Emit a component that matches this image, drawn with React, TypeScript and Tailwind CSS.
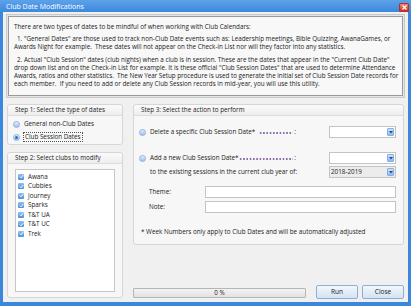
import React from 'react';

const font = { fontFamily: '"Open Sans", "Liberation Sans", sans-serif' };

const Radio: React.FC<{ checked?: boolean }> = ({ checked }) => (
    <span className="w-[7px] h-[7px] rounded-full border border-[#8fb3dd] bg-gradient-to-b from-[#e3eefb] to-[#9cc2ec] flex items-center justify-center shrink-0">
        {checked && <span className="w-[3px] h-[3px] rounded-full bg-[#2f6fc0]" />}
    </span>
);

const Check: React.FC = () => (
    <span className="w-[6px] h-[6px] rounded-[1px] bg-gradient-to-b from-[#8fc0f0] to-[#4a90dc] flex items-center justify-center shrink-0">
        <svg width="5" height="5" viewBox="0 0 5 5">
            <path d="M0.8 2.6 L2 3.8 L4.2 1.2" stroke="#fff" strokeWidth="1" fill="none" />
        </svg>
    </span>
);

const Combo: React.FC<{ value?: string; gray?: boolean }> = ({ value, gray }) => (
    <div className={`w-[67px] h-[12px] border border-[#c4c4c4] flex items-center ${gray ? 'bg-[#ececec]' : 'bg-white'}`}>
        <span className="flex-1 pl-[1px] text-[6.3px] text-[#222] leading-none">{value}</span>
        <span className="w-[7px] h-[8px] mr-[1px] rounded-[1px] bg-gradient-to-b from-[#cfe3fa] to-[#8ebbee] border border-[#86afe0] flex items-center justify-center">
            <svg width="4" height="3" viewBox="0 0 4 3"><path d="M0 0 L4 0 L2 2.5 Z" fill="#1f4f8f" /></svg>
        </span>
    </div>
);

const GroupBox: React.FC<{ title: string; className: string; children: React.ReactNode }> = ({ title, className, children }) => (
    <div className={`border border-[#d6d6d6] rounded-[3px] bg-[#f7f7f7] flex flex-col ${className}`}>
        <div className="h-[11px] shrink-0 border-b border-[#dcdcdc] bg-gradient-to-b from-[#fbfbfb] to-[#ededed] rounded-t-[3px] flex items-center pl-[7px] text-[6.3px] text-[#222] leading-none">
            {title}
        </div>
        {children}
    </div>
);

// label followed by a dotted leader ending in a colon
const Leader: React.FC<{ label: string; gap: string }> = ({ label, gap }) => (
    <div className="w-[146px] flex items-baseline whitespace-nowrap">
        <span>{label}</span>
        <span className={`flex-1 h-[1.5px] ${gap} bg-[radial-gradient(circle,#8a6fa8_35%,transparent_55%)] bg-[length:3.3px_1.5px] bg-repeat-x`} />
        <span>:</span>
    </div>
);

const clubs = ['Awana', 'Cubbies', 'Journey', 'Sparks', 'T&T UA', 'T&T UC', 'Trek'];

const App: React.FC = () => {
    return (
        <div className="w-[411px] h-[306px] bg-[#3b87dc] flex flex-col overflow-hidden" style={font}>
            {/* title bar */}
            <div className="h-[12px] shrink-0 flex items-center justify-between bg-gradient-to-b from-[#5da2ea] to-[#3c89dc]">
                <span className="pl-[6px] text-[7px] text-white leading-none">Club Date Modifications</span>
                <span className="w-[10px] h-[9px] mr-[2px] mt-[2px] rounded-[1px] border border-[#a33] bg-gradient-to-b from-[#f08070] to-[#d02818] flex items-center justify-center">
                    <svg width="5" height="5" viewBox="0 0 5 5"><path d="M0.5 0.5 L4.5 4.5 M4.5 0.5 L0.5 4.5" stroke="#fff" strokeWidth="1.2" /></svg>
                </span>
            </div>

            <div className="flex-1 mx-[3px] mb-[4px] bg-[#f0f0f0] flex flex-col text-[#222]">
                {/* info text */}
                <div className="mx-[3px] mt-[2px] h-[84px] border border-[#c8c8c8] p-[1px] bg-[#e6e6e6]">
                    <div className="h-full border border-[#9a9a9a] bg-[#f8f8f8] pl-[5px] pt-[6px] text-[6.3px] leading-[8.2px] whitespace-nowrap">
                        <div>There are two types of dates to be mindful of when working with Club Calendars:</div>
                        <div className="mt-[4px] pl-[3px]">1. "General Dates" are those used to track non-Club Date events such as: Leadership meetings, Bible Quizzing, AwanaGames, or</div>
                        <div>Awards Night for example.&nbsp; These dates will not appear on the Check-in List nor will they factor into any statistics.</div>
                        <div className="mt-[4px] pl-[3px]">2. Actual "Club Session" dates (club nights) when a club is in session. These are the dates that appear in the "Current Club Date"</div>
                        <div>drop down list and on the Check-in List for example. It is these official "Club Session Dates" that are used to determine Attendance</div>
                        <div className="tracking-[-0.03px]">Awards, ratios and other statistics.&nbsp; The New Year Setup procedure is used to generate the initial set of Club Session Date records for</div>
                        <div>each member.&nbsp; If you need to add or delete any Club Session records in mid-year, you will use this utility.</div>
                    </div>
                </div>

                <div className="flex-1 flex mt-[6px] mx-[4px] mb-[3px] gap-[10px]">
                    {/* left column */}
                    <div className="w-[116px] flex flex-col gap-[7px] mb-[1px]">
                        <GroupBox title="Step 1: Select the type of dates" className="h-[41px]">
                            <div className="flex flex-col pl-[5px] pt-[4px] gap-[5px] text-[6.3px] leading-none">
                                <div className="flex items-center gap-[4px] h-[8px]">
                                    <Radio />
                                    <span>General non-Club Dates</span>
                                </div>
                                <div className="flex items-center gap-[3px] h-[8px]">
                                    <Radio checked />
                                    <span className="border border-dotted border-[#555] px-[1px] py-[1px]">Club Session Dates</span>
                                </div>
                            </div>
                        </GroupBox>
                        <GroupBox title="Step 2: Select clubs to modify" className="flex-1">
                            <div className="flex-1 mx-[7px] mt-[5px] mb-[5px] bg-white border border-[#c6c6c6] pt-[2px] pl-[2px] text-[6.3px] leading-none">
                                {clubs.map((c) => (
                                    <div key={c} className="h-[9.5px] flex items-center gap-[4px]">
                                        <Check />
                                        <span>{c}</span>
                                    </div>
                                ))}
                            </div>
                        </GroupBox>
                    </div>

                    {/* right column */}
                    <div className="flex-1 flex flex-col">
                        <GroupBox title="Step 3: Select the action to perform" className="h-[141px]">
                            <div className="flex flex-col pl-[5px] pr-[7px] text-[6.3px] leading-none">
                                <div className="flex items-center mt-[10px] h-[12px]">
                                    <Radio />
                                    <span className="w-[4px]" />
                                    <Leader label="Delete a specific Club Session Date*" gap="ml-[4px] mr-[1px]" />
                                    <span className="flex-1" />
                                    <Combo />
                                </div>
                                <div className="flex items-center mt-[14px] h-[12px]">
                                    <Radio />
                                    <span className="w-[4px]" />
                                    <Leader label="Add a new Club Session Date*" gap="ml-[1px] mr-[1px]" />
                                    <span className="flex-1" />
                                    <Combo />
                                </div>
                                <div className="flex items-center mt-[2px] h-[12px]">
                                    <span className="pl-[11px]">to the existing sessions in the current club year of:</span>
                                    <span className="flex-1" />
                                    <Combo value="2018-2019" gray />
                                </div>
                                <div className="flex items-center mt-[8px] h-[12px]">
                                    <span className="pl-[10px]">Theme:</span>
                                    <span className="flex-1" />
                                    <div className="w-[191px] h-[12px] bg-white border border-[#c4c4c4]" />
                                </div>
                                <div className="flex items-center mt-[3px] h-[12px]">
                                    <span className="pl-[10px]">Note:</span>
                                    <span className="flex-1" />
                                    <div className="w-[191px] h-[12px] bg-white border border-[#c4c4c4]" />
                                </div>
                                <div className="mt-[16px] pl-[2px]">* Week Numbers only apply to Club Dates and will be automatically adjusted</div>
                            </div>
                        </GroupBox>
                        <div className="flex-1" />
                        <div className="flex items-end h-[14px]">
                            <div className="w-[173px] h-[10px] mb-[1px] border border-[#b5b5b5] rounded-[1px] bg-gradient-to-b from-[#f3f3f3] to-[#e2e2e2] flex items-center justify-center text-[6.3px] leading-none">
                                0 %
                            </div>
                            <span className="flex-1" />
                            <button className="w-[42px] h-[14px] border border-[#8eaed6] rounded-[2px] bg-gradient-to-b from-[#f2f7fc] to-[#d3e3f4] text-[6.5px] leading-none">Run</button>
                            <button className="w-[42px] h-[14px] ml-[4px] border border-[#8eaed6] rounded-[2px] bg-gradient-to-b from-[#f2f7fc] to-[#d3e3f4] text-[6.5px] leading-none">Close</button>
                        </div>
                    </div>
                </div>
            </div>
        </div>
    );
};

export default App;
